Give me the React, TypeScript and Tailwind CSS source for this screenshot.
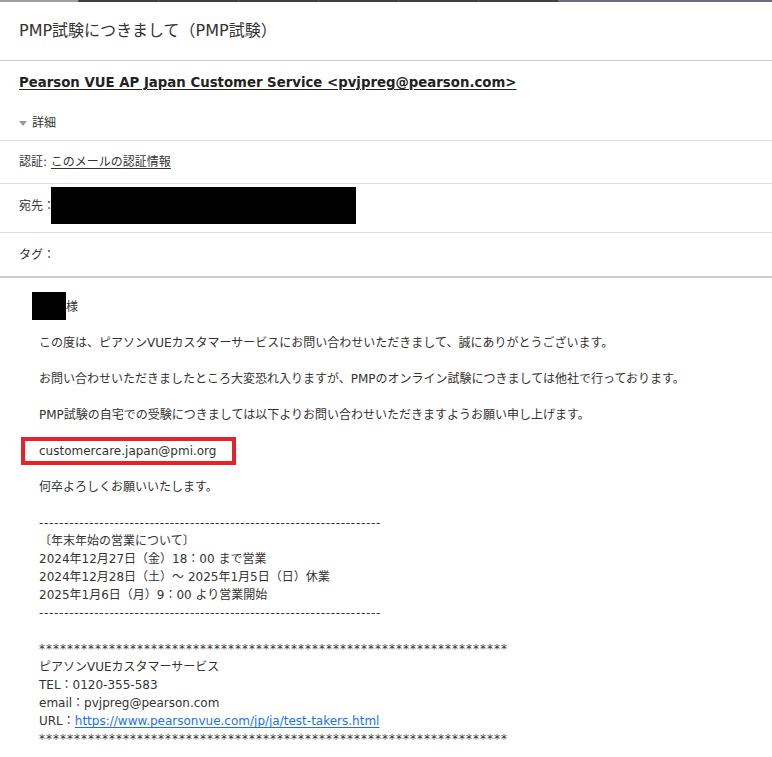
import React from 'react';

const font = "font-['DejaVu_Sans','Noto_Sans_CJK_JP',sans-serif]";

function TopBar() {
  return (
    <div className="flex h-[2px] w-full">
      <div className="w-[78px] bg-[#a0a0a0]" />
      {[0, 1, 2, 3, 4, 5].map((i) => (
        <div key={i} className="w-[80px] bg-[#3c4043] border-l border-[#55595e]" />
      ))}
      <div className="flex-1 bg-[#6d6e80]" />
    </div>
  );
}

function HeaderRow({ children, className }: { children: React.ReactNode; className: string }) {
  return <div className={`flex items-center pl-[19px] ${className}`}>{children}</div>;
}

export default function App() {
  const dashes = '-'.repeat(68);
  const stars = '*'.repeat(67);

  return (
    <div className={`min-h-[757px] w-[772px] bg-white text-[#333] ${font}`}>
      <TopBar />

      <div className="flex h-[59px] items-center border-b border-[#cccccc] pl-[19px] text-[16px] leading-[20px]">
        PMP試験につきまして（PMP試験）
      </div>

      <div className="flex flex-col border-b border-[#dddddd] pl-[19px] pb-[8px] pt-[12px]">
        <div className="h-[20px] text-[13.3px] font-bold leading-[20px] text-[#222] underline underline-offset-2">
          Pearson VUE AP Japan Customer Service &lt;pvjpreg@pearson.com&gt;
        </div>
        <div className="mt-[21px] flex h-[18px] items-center gap-[5px] text-[12px] leading-[18px]">
          <svg width="8" height="5" viewBox="0 0 8 5" className="mt-[1px]">
            <polygon points="0,0 8,0 4,5" fill="#999" />
          </svg>
          <span>詳細</span>
        </div>
      </div>

      <HeaderRow className="h-[43px] border-b border-[#dddddd] text-[12px]">
        <span>認証:&nbsp;</span>
        <span className="underline underline-offset-2">このメールの認証情報</span>
      </HeaderRow>

      <HeaderRow className="h-[49px] items-start border-b border-[#dddddd] pt-[3px] text-[12px]">
        <div className="flex h-[37px] items-center">
          <span>宛先：</span>
          <div className="ml-[-4px] h-[37px] w-[305px] bg-black" />
        </div>
      </HeaderRow>

      <HeaderRow className="h-[43px] text-[12px]">
        <span>タグ：</span>
      </HeaderRow>

      <div className="h-[2px] bg-[#cccccc]" />

      <div className="pl-[39px] text-[12px] leading-[18px] text-[#333]">
        <div className="mt-[14px] ml-[-7px] flex h-[28px] items-center">
          <div className="h-[28px] w-[34px] bg-black" />
          <span className="mt-[2px]">様</span>
        </div>

        <p className="mt-[14px]">
          この度は、ピアソンVUEカスタマーサービスにお問い合わせいただきまして、誠にありがとうございます。
        </p>
        <p className="mt-[18px]">
          お問い合わせいただきましたところ大変恐れ入りますが、PMPのオンライン試験につきましては他社で行っております。
        </p>
        <p className="mt-[18px]">
          PMP試験の自宅での受験につきましては以下よりお問い合わせいただきますようお願い申し上げます。
        </p>

        <div className="ml-[-18px] mt-[13px] w-[215px] border-[4px] border-[#e8202a] py-[1px] pl-[14px]">
          customercare.japan@pmi.org
        </div>

        <p className="mt-[13px]">何卒よろしくお願いいたします。</p>

        <div className="mt-[18px]">
          <div className="tracking-[0.7px]">{dashes}</div>
          <div>〔年末年始の営業について〕</div>
          <div>2024年12月27日（金）18：00 まで営業</div>
          <div>2024年12月28日（土）～ 2025年1月5日（日）休業</div>
          <div>2025年1月6日（月）9：00 より営業開始</div>
          <div className="tracking-[0.7px]">{dashes}</div>
        </div>

        <div className="mt-[18px] pb-[20px]">
          <div className="tracking-[1px]">{stars}</div>
          <div>ピアソンVUEカスタマーサービス</div>
          <div>TEL：0120-355-583</div>
          <div>email：pvjpreg@pearson.com</div>
          <div>
            URL：
            <a href="#" className="text-[#1a73e8] underline underline-offset-2">
              https://www.pearsonvue.com/jp/ja/test-takers.html
            </a>
          </div>
          <div className="tracking-[1px]">{stars}</div>
        </div>
      </div>
    </div>
  );
}
